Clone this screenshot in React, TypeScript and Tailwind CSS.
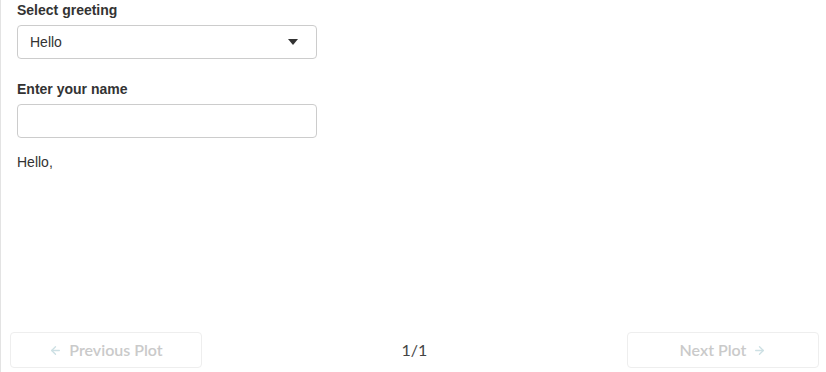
import React from 'react';
import { ArrowLeft, ArrowRight } from 'lucide-react';

const App: React.FC = () => {
  return (
    <div className="w-[826px] h-[372px] bg-white border-l border-[#e3e3e3] flex flex-col text-[#333] overflow-hidden">
      <div className="flex-1 pl-4 pt-0" style={{ fontFamily: '"Liberation Sans", Arial, sans-serif' }}>
        <div className="w-[300px]">
          <label className="block text-sm font-bold leading-5 mb-[5px]">Select greeting</label>
          <div className="h-[34px] border border-[#ccc] rounded-[4px] flex items-center justify-between pl-3 pr-[18px] text-sm">
            <span>Hello</span>
            <span className="w-0 h-0 border-l-[5px] border-r-[5px] border-t-[6px] border-l-transparent border-r-transparent border-t-[#333]" />
          </div>
          <label className="block text-sm font-bold leading-5 mt-5 mb-[5px]">Enter your name</label>
          <div className="h-[34px] border border-[#ccc] rounded-[4px]" />
          <p className="text-sm leading-5 mt-[14px]">Hello,</p>
        </div>
      </div>
      <div
        className="flex items-center justify-between pl-[9px] pr-[7px] pb-1"
        style={{ fontFamily: 'Lato, "Liberation Sans", sans-serif' }}
      >
        <button className="w-[192px] h-[36px] border border-[#eee] rounded-[4px] flex items-center justify-center gap-[7px] text-base font-semibold text-[#cacaca]">
          <ArrowLeft size={13} strokeWidth={2.5} className="text-[#cde0e4]" />
          <span>Previous Plot</span>
        </button>
        <span className="text-base text-[#444]">1/1</span>
        <button className="w-[192px] h-[36px] border border-[#eee] rounded-[4px] flex items-center justify-center gap-[7px] text-base font-semibold text-[#cacaca]">
          <span>Next Plot</span>
          <ArrowRight size={13} strokeWidth={2.5} className="text-[#cde0e4]" />
        </button>
      </div>
    </div>
  );
};

export default App;
